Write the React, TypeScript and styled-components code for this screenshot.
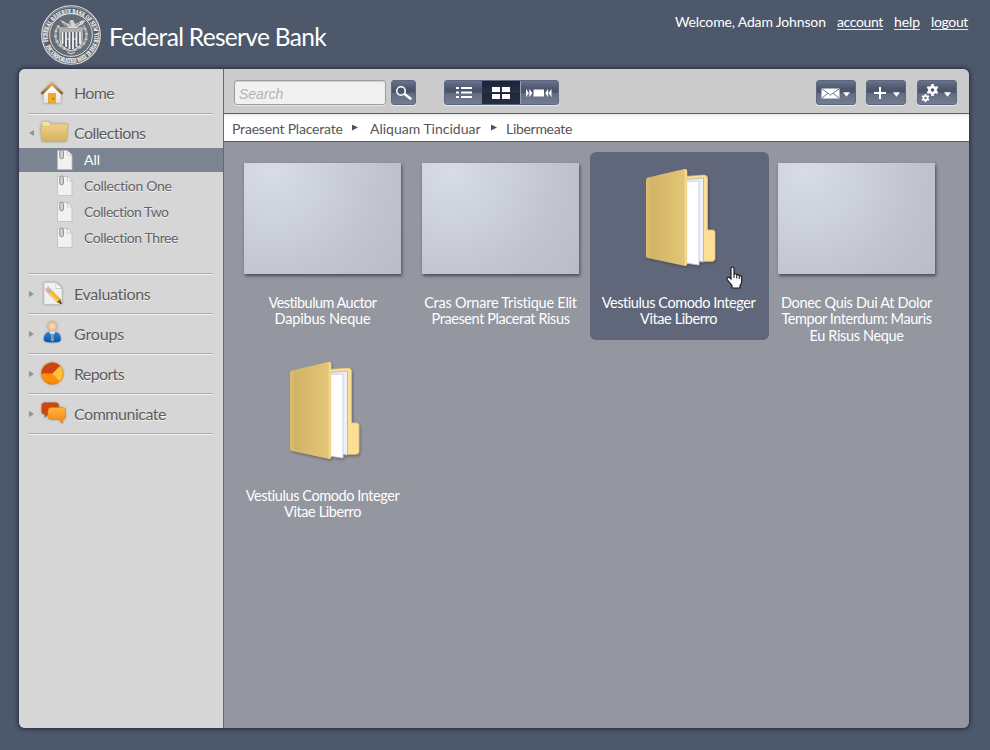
import React from "react";
import styled, { createGlobalStyle, css } from "styled-components";

const GlobalStyle = createGlobalStyle`
  * { box-sizing: border-box; }
  body {
    margin: 0;
    background: #4e586b;
    font-family: Lato, "Liberation Sans", sans-serif;
    overflow: hidden;
  }
`;

const Page = styled.div`
  width: 990px;
  height: 750px;
  display: flex;
  flex-direction: column;
  padding: 0 21px 0 19px;
`;

const Header = styled.header`
  height: 69px;
  flex: none;
  display: flex;
  justify-content: space-between;
  color: #fff;
`;

const Brand = styled.div`
  display: flex;
  align-items: flex-start;
  gap: 7px;
  padding: 4px 0 0 21px;
`;

const BrandName = styled.h1`
  margin: 18px 0 0;
  font-size: 24.5px;
  line-height: 30px;
  font-weight: 400;
  letter-spacing: -0.69px;
  white-space: nowrap;
`;

const UserBar = styled.nav`
  display: flex;
  padding: 13px 1px 0 0;
  font-size: 14px;
  line-height: 17px;
  white-space: nowrap;
`;

const Welcome = styled.span`
  width: 162px;
  letter-spacing: -0.15px;
`;

const UserLink = styled.a<{ $track: number; $w: number }>`
  width: ${(p) => p.$w}px;
  height: 17px;
  margin-left: 11px;
  border-bottom: 1px solid #dfe2e8;
  letter-spacing: ${(p) => p.$track}px;
  &:first-of-type { margin-left: 0; }
`;

const Panel = styled.div`
  width: 950px;
  height: 659px;
  display: flex;
  border-radius: 6px;
  overflow: hidden;
  background: #9496a0;
`;

const PanelShadow = styled.div`
  border-radius: 6px;
  width: 950px;
  box-shadow: 0 0 4px 1px rgba(22, 28, 44, 0.75);
`;

const Sidebar = styled.aside`
  width: 205px;
  flex: none;
  background: #d6d6d6;
  border-right: 1px solid #626878;
`;

const Main = styled.main`
  flex: 1;
  display: flex;
  flex-direction: column;
`;

const Divider = styled.div`
  height: 2px;
  margin: 0 10px;
  background: linear-gradient(#adadad 50%, #f0f0f0 50%);
`;

const NavRow = styled.div<{ $h: number; $pt?: number }>`
  height: ${(p) => p.$h}px;
  padding-top: ${(p) => p.$pt ?? 0}px;
  display: flex;
  align-items: center;
`;

const Arrow = styled.span<{ $left?: boolean; $hidden?: boolean }>`
  width: 5px;
  height: 6px;
  margin: 0 6px 0 10px;
  visibility: ${(p) => (p.$hidden ? "hidden" : "visible")};
  background: #8f919b;
  clip-path: ${(p) =>
    p.$left ? "polygon(100% 0, 0 50%, 100% 100%)" : "polygon(0 0, 100% 50%, 0 100%)"};
`;

const NavIcon = styled.span`
  width: 34px;
  height: 30px;
  display: flex;
  svg {
    overflow: visible;
    filter: drop-shadow(0 0 1px rgba(110, 110, 110, 0.6));
  }
`;

const NavLabel = styled.span<{ $track: number }>`
  margin-top: -1px;
  font-size: 16px;
  line-height: 20px;
  color: #5c5c5e;
  letter-spacing: ${(p) => p.$track}px;
  text-shadow: 0 1px 0 #f4f4f4;
`;

const SubRow = styled.div<{ $active?: boolean }>`
  height: ${(p) => (p.$active ? 24 : 26)}px;
  display: flex;
  align-items: center;
  gap: 10px;
  padding-left: 37px;
  ${(p) =>
    p.$active &&
    css`
      background: #7b8492;
      margin-bottom: 1px;
    `}
`;

const SubLabel = styled.span<{ $track: number; $active?: boolean }>`
  font-size: 14px;
  line-height: 18px;
  color: ${(p) => (p.$active ? "#fff" : "#626264")};
  letter-spacing: ${(p) => p.$track}px;
  text-shadow: ${(p) => (p.$active ? "none" : "0 1px 0 #f4f4f4")};
`;

const SubList = styled.div`
  height: 125px;
`;

const Toolbar = styled.div`
  height: 45px;
  flex: none;
  display: flex;
  align-items: flex-start;
  padding: 11px 12px 0 10px;
  background: #cbcbcb;
  border-bottom: 1px solid #565d70;
`;

const SearchBox = styled.div`
  width: 152px;
  height: 25px;
  margin-right: 5px;
  padding-left: 4px;
  border: 1px solid #9d9d9f;
  border-radius: 3px;
  background: #f1f1f1;
  box-shadow: 0 1px 0 #e4e4e4, inset 0 1px 1px #d0d0d0;
  font: italic 14px/26px "Liberation Sans", Arial, sans-serif;
  color: #b3b3b3;
`;

const surface = css`
  border: 1px solid #5d6880;
  border-radius: 3px;
  background: linear-gradient(#68738a 0%, #4b566c 35%, #4b556b 52%, #636c80 54%, #737c90 100%);
  box-shadow: 0 1px 0 #e9e9e9;
`;

const Button = styled.button<{ $w: number; $ml?: number }>`
  ${surface}
  width: ${(p) => p.$w}px;
  height: 25px;
  margin-left: ${(p) => p.$ml ?? 0}px;
  padding: 0;
  display: flex;
  align-items: center;
  justify-content: center;
`;

const Spacer = styled.div`
  flex: 1;
`;

const Segments = styled.div`
  ${surface}
  height: 25px;
  width: 115px;
  margin-left: 28px;
  display: flex;
  overflow: hidden;
`;

const Segment = styled.div<{ $active?: boolean }>`
  flex: 1;
  display: flex;
  align-items: center;
  justify-content: center;
  ${(p) =>
    p.$active &&
    css`
      background: linear-gradient(#1b2337, #283046 50%, #1e263a 52%, #262e43);
      border-right: 1px solid #98a0b0;
    `}
`;

const Crumbs = styled.nav`
  height: 28px;
  flex: none;
  display: flex;
  align-items: center;
  padding: 2px 0 0 8px;
  background: linear-gradient(#e6e6e6, #fff 3px);
  border-bottom: 1px solid #565d70;
  font-size: 14px;
  line-height: 18px;
  color: #555557;
`;

const Crumb = styled.span<{ $track: number; $w: number }>`
  width: ${(p) => p.$w}px;
  white-space: nowrap;
  letter-spacing: ${(p) => p.$track}px;
`;

const CrumbArrow = styled.span<{ $after: number }>`
  width: 6px;
  height: 6px;
  margin: -2px ${(p) => p.$after}px 0 9px;
  background: #46506c;
  clip-path: polygon(0 0, 100% 50%, 0 100%);
`;

const Grid = styled.div`
  display: grid;
  grid-template-columns: repeat(4, 178px);
  grid-auto-rows: 188px;
  row-gap: 5px;
  padding: 10px;
`;

const Tile = styled.div<{ $hover?: boolean }>`
  position: relative;
  width: 179px;
  height: 188px;
  padding-top: 11px;
  display: flex;
  flex-direction: column;
  align-items: center;
  border-radius: 6px;
  background: ${(p) => (p.$hover ? "#60677a" : "transparent")};
`;

const Preview = styled.div`
  height: 132px;
  flex: none;
  width: 158px;
  align-self: flex-start;
  margin-left: 10px;
`;

const Thumb = styled.div`
  width: 157px;
  height: 111px;
  background: radial-gradient(circle at 18% 8%, #d8dce7 0, #cbcfdb 38%, #c0c3ce 70%, #b9bdc6 100%);
  box-shadow: 1px 2px 3px rgba(62, 64, 74, 0.85);
`;

const Caption = styled.div`
  width: 177px;
  align-self: flex-start;
`;

const CaptionLine = styled.span<{ $track: number }>`
  display: block;
  text-align: center;
  font-size: 14.5px;
  line-height: 16.4px;
  color: #fff;
  white-space: nowrap;
  letter-spacing: ${(p) => p.$track}px;
`;

const Cursor = styled.div`
  position: absolute;
  left: 135px;
  top: 114px;
`;

function Seal() {
  const wreath = Array.from({ length: 26 }, (_, i) => {
    const a = ((-35 + i * 10) * Math.PI) / 180;
    return [31 + 15.5 * Math.cos(a), 31 + 15 * Math.sin(a)];
  });
  return (
    <svg width="62" height="62" viewBox="0 0 62 62">
      <defs>
        <path id="sealTop" d="M8.3 38.5 A23.4 23.4 0 1 1 53.7 38.5" />
        <path id="sealBottom" d="M4.8 39.5 A27.5 27.5 0 0 0 57.2 39.5" />
      </defs>
      <circle cx="31" cy="31" r="29.3" fill="#566071" stroke="#e4e3de" strokeWidth="1.1" />
      <circle cx="31" cy="31" r="27.9" fill="none" stroke="#c3c5c6" strokeWidth=".5" />
      <circle cx="31" cy="31" r="21.4" fill="#656d79" stroke="#dcdcd8" strokeWidth="1" />
      <g fill="#f7f6ef" stroke="#f7f6ef" strokeWidth=".2" fontFamily="Liberation Serif, serif" fontWeight="700" fontSize="6.6">
        <text>
          <textPath href="#sealTop" startOffset="1" textLength="87" lengthAdjust="spacingAndGlyphs">FEDERAL RESERVE BANK OF NEW YORK</textPath>
        </text>
        <text>
          <textPath href="#sealBottom" startOffset="3" textLength="65" lengthAdjust="spacingAndGlyphs">INCORPORATED MAY 18 1914</textPath>
        </text>
      </g>
      {wreath.map(([x, y], i) => (
        <circle key={i} cx={x} cy={y < 22 ? 62 - y : y} r="1.5" fill={i % 2 ? "#c9c9c2" : "#9da1a3"} />
      ))}
      <path d="M19 16q4 0 7 3l3 1q0-4 3-4 2 0 2 2l1 2 3-1q3-3 7-3-1 5-6 6l-3 2h-6l-4-2q-4-2-5-6z" fill="#d5d4cc" />
      <path d="M23 19l5 3M40 19l-5 3M30 18v4" stroke="#666d77" strokeWidth=".8" />
      <path d="M20 24h22v12q0 7-11 11-11-4-11-11z" fill="#596271" stroke="#e9e8e1" strokeWidth="1" />
      <path d="M20 25h22v3H20z" fill="#aeb0ae" />
      <path d="M22.5 28v12M26 28v15M29.5 28v17M33 28v17M36.5 28v15M40 28v12" stroke="#f3f2ec" strokeWidth="1.8" />
      <path d="M26 35h4M33 35h4" stroke="#e8e7e0" strokeWidth="1" />
      <path d="M27 48l4 2 4-2" stroke="#dfded7" fill="none" />
    </svg>
  );
}

const HomeIcon = () => (
  <svg width="26" height="30" viewBox="0 0 26 30">
    <defs>
      <linearGradient id="roof" x2="0" y2="1"><stop stopColor="#e0aa52" /><stop offset="1" stopColor="#8e5a1d" /></linearGradient>
      <linearGradient id="wall" x2="0" y2="1"><stop stopColor="#fff" /><stop offset="1" stopColor="#e3e3e3" /></linearGradient>
    </defs>
    <path d="M3.5 14 12 6l9 8v10H3.5z" fill="url(#wall)" stroke="#c6c6c6" strokeWidth=".5" />
    <path d="M1.6 14.8 12 4.8l10.4 10" fill="none" stroke="url(#roof)" strokeWidth="2.5" />
    <path d="M8.5 14.500h7V24h-7z" fill="#f4ac26" stroke="#d9952a" strokeWidth=".7" />
    <path d="M13 19v1.500" stroke="#7d5210" strokeWidth="1.3" />
  </svg>
);

const FolderIcon = () => (
  <svg width="30" height="30" viewBox="0 0 30 30">
    <defs>
      <linearGradient id="folderFront" x2="0" y2="1"><stop stopColor="#ecd084" /><stop offset="1" stopColor="#d6b163" /></linearGradient>
    </defs>
    <path d="M2 4.500q0-1 1-1h5.500q1 0 1.500 2h15q1 0 1 1v15H3z" fill="#fbe0a0" stroke="#c8b178" strokeWidth=".4" />
    <path d="M.5 9.200q0-1 1-1h8l1.500-2h15.800q1 0 1 1L26.500 22q-.2 1.500-1.500 1.500H3.500Q2 23.500 1.900 22z" fill="url(#folderFront)" stroke="#c4a665" strokeWidth=".4" />
  </svg>
);

const PencilIcon = () => (
  <svg width="26" height="30" viewBox="0 0 26 30">
    <path d="M4 3.500h12l6 6v15.800H4z" fill="#f0f0f0" stroke="#bfbfbf" strokeWidth=".6" />
    <path d="M16 3.500v6h6z" fill="#fff" stroke="#bbb" strokeWidth=".7" />
    <path d="M4.800 10.800 8.200 7.600l2.500 2.500-3.400 3.400z" fill="#e9a9a0" />
    <path d="M6.800 13 10.200 9.800l2 2L8.800 15z" fill="#b5b5bb" />
    <path d="M8.600 15l3.600-3.400 8.400 8.400-.4 3-3.200.2z" fill="#f8b524" />
    <path d="M9.800 14.200 17.800 22.300" stroke="#fedb6e" strokeWidth="1.1" />
    <path d="M20.500 20l1.300 5-5.200-1.800z" fill="#86613a" />
    <path d="M20.600 22.500l1.200 2.500-2.500-.8z" fill="#222" />
  </svg>
);

const PersonIcon = () => (
  <svg width="26" height="30" viewBox="0 0 26 30">
    <defs>
      <linearGradient id="suit" x2="0" y2="1"><stop stopColor="#2d83ce" /><stop offset="1" stopColor="#0756a7" /></linearGradient>
      <radialGradient id="face"><stop stopColor="#fde0bd" /><stop offset="1" stopColor="#e4b68d" /></radialGradient>
    </defs>
    <path d="M3.800 21q0-8 6-8h5q6 0 6 8 0 2.500-8.500 2.500T3.800 21z" fill="url(#suit)" />
    <path d="M9 12.500h6.800l-3.400 5z" fill="#e8f0f7" />
    <path d="M11.300 14.500h2.200l.6 6.500-1.700 2-1.700-2z" fill="#8997a9" />
    <ellipse cx="12.4" cy="7.4" rx="4.9" ry="5.2" fill="url(#face)" />
  </svg>
);

const PieIcon = () => (
  <svg width="26" height="30" viewBox="0 0 26 30">
    <defs>
      <linearGradient id="pieBase" x2="0" y2="1"><stop stopColor="#ff9d17" /><stop offset="1" stopColor="#f98a09" /></linearGradient>
    </defs>
    <circle cx="12.3" cy="14.5" r="11" fill="url(#pieBase)" />
    <path d="M12.3 14.500 20.500 7.200A11 11 0 0 1 20 22.400z" fill="#fdc23a" />
    <path d="M12.3 14.500H1.300A11 11 0 0 1 20 6.700z" fill="#cf4312" />
    <circle cx="12.3" cy="14.5" r="10.7" fill="none" stroke="#c45a12" strokeOpacity=".45" strokeWidth=".7" />
  </svg>
);

const ChatIcon = () => (
  <svg width="28" height="30" viewBox="0 0 28 30">
    <defs>
      <linearGradient id="bubble" x2="0" y2="1"><stop stopColor="#ffb63a" /><stop offset="1" stopColor="#f38214" /></linearGradient>
    </defs>
    <path d="M5 3.500h10.500q3.500 0 3.500 3.500v5q0 3.500-3.500 3.500H8L4.500 19l.3-3.500Q1.500 15.500 1.500 12V7q0-3.500 3.500-3.500z" fill="#cc460f" />
    <path d="M11.500 8.500h10.500q3.500 0 3.500 3.500v5q0 3.500-3 3.500l.3 4-4.300-4h-7Q8 20.500 8 17v-5q0-3.500 3.500-3.500z" fill="url(#bubble)" stroke="#e2781a" strokeWidth=".5" />
  </svg>
);

const PageIcon = () => (
  <svg width="18" height="22" viewBox="0 0 18 22">
    <path d="M1.500 1.500h10l4.500 4.500v14.500H1.500z" fill="#f1f1f1" stroke="#bcbcbe" strokeWidth=".8" />
    <path d="M11.500 1.500V6H16z" fill="#fff" stroke="#b8b8b8" strokeWidth=".7" />
    <path d="M3.800 2.800V8a1.800 1.800 0 0 0 3.600 0V2.800Q7.400 1 5.600 1T3.800 2.800" fill="#d4d4d6" stroke="#8b8b8d" strokeWidth="1" />
  </svg>
);

const LargeFolder = ({ id }: { id: string }) => (
  <svg width="158" height="112" viewBox="0 0 158 112">
    <defs>
      <linearGradient id={id}><stop stopColor="#e0bf70" /><stop offset=".12" stopColor="#d2b368" /><stop offset=".9" stopColor="#e3c577" /><stop offset="1" stopColor="#f0d691" /></linearGradient>
      <filter id={id + "s"} x="-10%" y="-10%" width="125%" height="125%"><feDropShadow dx="1" dy="1.500" stdDeviation="1" floodColor="#30323c" floodOpacity=".5" /></filter>
    </defs>
    <g filter={`url(#${id}s)`}>
      <path d="M85 13.500l19-1.500q3.500 0 3.500 3.500v51.500h5q2.500 0 2.500 2.500v26q0 2.500-2.500 2.800L85 98.500z" fill="#fcdf96" stroke="#e0be70" strokeWidth=".7" />
      <path d="M86 16.500l17.500-1.500v84L86 96.500z" fill="#eef0f8" stroke="#a9adbb" strokeWidth=".8" />
      <path d="M86 18.500l13-.5V102L86 100z" fill="#fff" stroke="#c3c6d2" strokeWidth=".8" />
      <path d="M46 17.500q0-2.400 2-3L84.500 6.100q2.700-.6 2.700 1.900v92.500q0 2.800-2.700 2.200L48 95q-2-.5-2-2.500z" fill={`url(#${id})`} />
      <path d="M85.600 7v95.400" stroke="#f2dc9d" strokeWidth="1.2" />
    </g>
  </svg>
);

const SearchGlyph = () => (
  <svg width="23" height="23" viewBox="0 0 23 23">
    <circle cx="9" cy="10" r="4.2" fill="none" stroke="#fff" strokeWidth="1.6" />
    <path d="M12.5 13l6.800 5.200" stroke="#fff" strokeWidth="2.6" />
  </svg>
);

const ListGlyph = () => (
  <svg width="16" height="11" viewBox="0 0 16 11" fill="#fff">
    <path d="M0 0h3v2H0zM5 0h11v2H5zM0 4.500h3v2H0zM5 4.500h11v2H5zM0 9h3v2H0zM5 9h11v2H5z" />
  </svg>
);

const GridGlyph = () => (
  <svg width="18" height="12" viewBox="0 0 18 12" fill="#fff">
    <path d="M0 0h8v5H0zM10 0h8v5h-8zM0 7h8v5H0zM10 7h8v5h-8z" />
  </svg>
);

const FlowGlyph = () => (
  <svg width="26" height="10" viewBox="0 0 26 10" fill="#fff">
    <path d="M0 .8 2.800 5 0 9.200zM3.300.8 6.300 5l-3 4.200zM7.500 1.500h10.500v7H7.500zM25.500.8 22.700 5l2.800 4.200zM22.200.8 19.200 5l3 4.200z" />
  </svg>
);

const Caret = () => <path d="M26 11.200h7l-3.500 4.500z" fill="#fff" />;

const MailGlyph = () => (
  <svg width="38" height="23" viewBox="0 0 38 23">
    <path d="M4.500 7.500h18v10h-18z" fill="#fff" />
    <path d="M5 8l8.500 6L22 8M5 17l6-4.800M22 17l-6-4.800" fill="none" stroke="#626c81" strokeWidth=".9" />
    <Caret />
  </svg>
);

const PlusGlyph = () => (
  <svg width="38" height="23" viewBox="0 0 38 23">
    <path d="M7 12h12M13 6v12" stroke="#fff" strokeWidth="2" />
    <Caret />
  </svg>
);

const GearsGlyph = () => (
  <svg width="38" height="23" viewBox="0 0 38 23">
    <g fill="none" stroke="#fff">
      <circle cx="14.5" cy="9" r="3.1" strokeWidth="2.6" />
      <path d="M14.5 3v2.500M14.5 12.500V15M9.300 6l2.200 1.300M17.500 10.700l2.200 1.300M9.300 12l2.200-1.300M17.500 7.300 19.700 6" strokeWidth="2.5" />
      <circle cx="7.5" cy="17" r="2.100" strokeWidth="1.8" />
      <path d="M7.5 12.900v1.700M7.500 19.400v1.700M4 15l1.500.8M9.500 18.200 11 19M4 19l1.500-.8M9.500 15.800 11 15" strokeWidth="1.700" />
    </g>
    <Caret />
  </svg>
);

const HandCursor = () => (
  <svg width="20" height="24" viewBox="0 0 20 24">
    <path d="M6 2.500q0-1.500 1.500-1.500T9 2.500V8q2-.8 2.800.8 2-.6 2.500 1 2.400-.4 2.400 1.700v4q0 2-1.700 4V22H7v-2.500L2.500 14q-1.200-1.800.2-2.500T6 13z" fill="#fafafa" stroke="#11131c" strokeWidth="1.1" />
    <path d="M9 8v4M11.800 9v3.500M14.300 10v3" stroke="#11131c" strokeWidth="1" />
  </svg>
);

const collections = [
  { label: "All", track: 0, active: true },
  { label: "Collection One", track: -0.3 },
  { label: "Collection Two", track: -0.46 },
  { label: "Collection Three", track: -0.42 },
];

const sections = [
  { label: "Evaluations", track: -0.32, Icon: PencilIcon },
  { label: "Groups", track: -0.15, Icon: PersonIcon },
  { label: "Reports", track: -0.64, Icon: PieIcon },
  { label: "Communicate", track: -0.48, Icon: ChatIcon },
];

type Item = { folder?: boolean; hover?: boolean; lines: [string, number][] };
const items: Item[] = [
  { lines: [["Vestibulum Auctor", -0.56], ["Dapibus Neque", -0.17]] },
  { lines: [["Cras Ornare Tristique Elit", -0.23], ["Praesent Placerat Risus", -0.41]] },
  { folder: true, hover: true, lines: [["Vestiulus Comodo Integer", -0.43], ["Vitae Liberro", -0.41]] },
  { lines: [["Donec Quis Dui At Dolor", -0.33], ["Tempor Interdum: Mauris", -0.44], ["Eu Risus Neque", -0.36]] },
  { folder: true, lines: [["Vestiulus Comodo Integer", -0.43], ["Vitae Liberro", -0.41]] },
];

export default function App() {
  return (
    <Page>
      <GlobalStyle />
      <Header>
        <Brand>
          <Seal />
          <BrandName>Federal Reserve Bank</BrandName>
        </Brand>
        <UserBar>
          <Welcome>Welcome, Adam Johnson</Welcome>
          <UserLink $track={-0.37} $w={46}>account</UserLink>
          <UserLink $track={-0.1} $w={26}>help</UserLink>
          <UserLink $track={-0.35} $w={37}>logout</UserLink>
        </UserBar>
      </Header>
      <PanelShadow>
        <Panel>
          <Sidebar>
            <NavRow $h={44} $pt={5}>
              <Arrow $hidden />
              <NavIcon><HomeIcon /></NavIcon>
              <NavLabel $track={-0.65}>Home</NavLabel>
            </NavRow>
            <Divider />
            <NavRow $h={33} $pt={3}>
              <Arrow $left />
              <NavIcon><FolderIcon /></NavIcon>
              <NavLabel $track={-0.57}>Collections</NavLabel>
            </NavRow>
            <SubList>
              {collections.map((c) => (
                <SubRow key={c.label} $active={c.active}>
                  <PageIcon />
                  <SubLabel $track={c.track} $active={c.active}>{c.label}</SubLabel>
                </SubRow>
              ))}
            </SubList>
            <Divider />
            {sections.map(({ label, track, Icon }) => (
              <React.Fragment key={label}>
                <NavRow $h={38}>
                  <Arrow />
                  <NavIcon><Icon /></NavIcon>
                  <NavLabel $track={track}>{label}</NavLabel>
                </NavRow>
                <Divider />
              </React.Fragment>
            ))}
          </Sidebar>
          <Main>
            <Toolbar>
              <SearchBox>Search</SearchBox>
              <Button $w={25}><SearchGlyph /></Button>
              <Segments>
                <Segment><ListGlyph /></Segment>
                <Segment $active><GridGlyph /></Segment>
                <Segment><FlowGlyph /></Segment>
              </Segments>
              <Spacer />
              <Button $w={40}><MailGlyph /></Button>
              <Button $w={40} $ml={10}><PlusGlyph /></Button>
              <Button $w={40} $ml={11}><GearsGlyph /></Button>
            </Toolbar>
            <Crumbs>
              <Crumb $track={-0.19} $w={111}>Praesent Placerate</Crumb>
              <CrumbArrow $after={12} />
              <Crumb $track={0} $w={112}>Aliquam Tinciduar</Crumb>
              <CrumbArrow $after={9} />
              <Crumb $track={-0.3} $w={66}>Libermeate</Crumb>
            </Crumbs>
            <Grid>
              {items.map((it, i) => (
                <Tile key={i} $hover={it.hover}>
                  <Preview>{it.folder ? <LargeFolder id={`cover${i}`} /> : <Thumb />}</Preview>
                  <Caption>
                    {it.lines.map(([text, track]) => (
                      <CaptionLine key={text} $track={track}>{text}</CaptionLine>
                    ))}
                  </Caption>
                  {it.hover && <Cursor><HandCursor /></Cursor>}
                </Tile>
              ))}
            </Grid>
          </Main>
        </Panel>
      </PanelShadow>
    </Page>
  );
}
